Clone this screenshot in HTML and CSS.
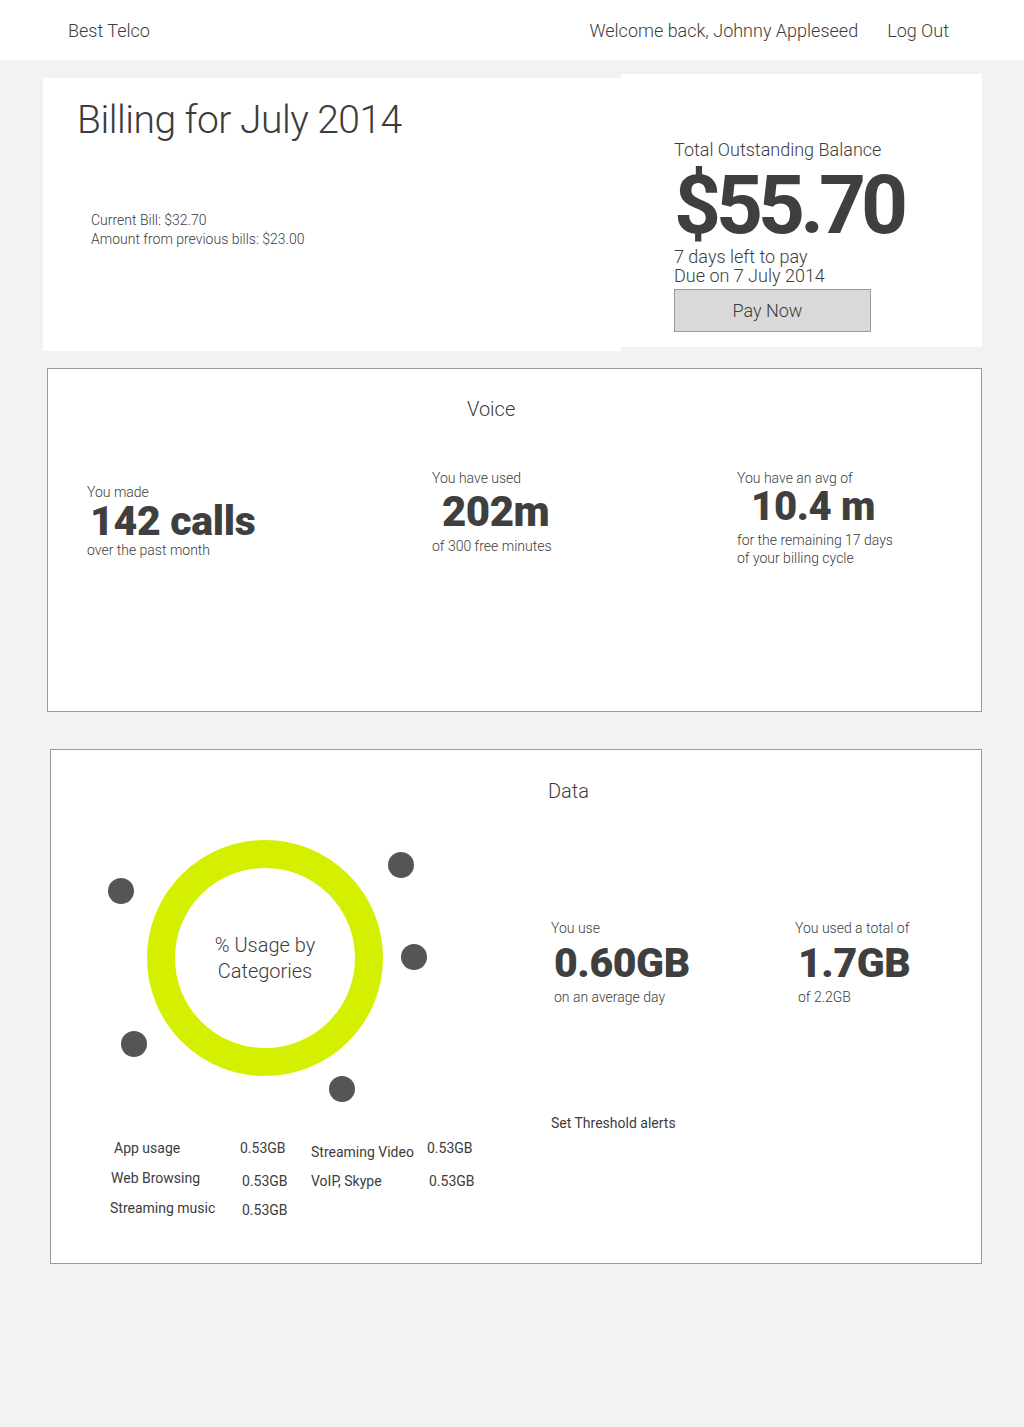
FILE: index.html
```html
<!DOCTYPE html>
<html lang="en">
<head>
<meta charset="utf-8">
<title>Best Telco – Billing</title>
<link rel="stylesheet" href="styles.css">
</head>
<body>
<header class="topbar">
  <div class="brand">Best Telco</div>
  <nav class="user-nav">
    <span>Welcome back, Johnny Appleseed</span>
    <span>Log Out</span>
  </nav>
</header>

<section class="billing">
  <div class="bill-left">
    <h1 class="bill-title">Billing for July 2014</h1>
    <div class="bill-lines">
      <div>Current Bill: $32.70</div>
      <div>Amount from previous bills: $23.00</div>
    </div>
  </div>
  <div class="bill-right">
    <div class="balance-label">Total Outstanding Balance</div>
    <div class="balance-amount">$55.70</div>
    <div class="balance-due">
      <div>7 days left to pay</div>
      <div>Due on 7 July 2014</div>
    </div>
    <div class="pay-btn">Pay Now</div>
  </div>
</section>

<section class="card voice">
  <h2 class="card-title voice-title">Voice</h2>
  <div class="voice-stats">
    <div class="stat stat-calls">
      <div class="stat-small">You made</div>
      <div class="stat-big big-calls">142 calls</div>
      <div class="stat-small">over the past month</div>
    </div>
    <div class="stat stat-minutes">
      <div class="stat-small">You have used</div>
      <div class="stat-big big-minutes">202m</div>
      <div class="stat-small sub-minutes">of 300 free minutes</div>
    </div>
    <div class="stat stat-avg">
      <div class="stat-small">You have an avg of</div>
      <div class="stat-big big-avg">10.4 m</div>
      <div class="stat-small sub-avg">for the remaining 17 days<br>of your billing cycle</div>
    </div>
  </div>
</section>

<section class="card data">
  <div class="data-left">
    <div class="donut-wrap">
      <div class="donut"><span>% Usage by<br>Categories</span></div>
      <span class="dot dot-1"></span>
      <span class="dot dot-2"></span>
      <span class="dot dot-3"></span>
      <span class="dot dot-4"></span>
      <span class="dot dot-5"></span>
    </div>
    <div class="legend">
      <span class="lg-label l-app">App usage</span>
      <span class="lg-val">0.53GB</span>
      <span class="lg-label l-video">Streaming Video</span>
      <span class="lg-val">0.53GB</span>

      <span class="lg-label l-web">Web Browsing</span>
      <span class="lg-val v-low">0.53GB</span>
      <span class="lg-label l-voip">VoIP, Skype</span>
      <span class="lg-val v-low">0.53GB</span>

      <span class="lg-label l-music">Streaming music</span>
      <span class="lg-val v-low2">0.53GB</span>
    </div>
  </div>
  <div class="data-right">
    <h2 class="card-title">Data</h2>
    <div class="data-stats">
      <div class="stat">
        <div class="stat-small">You use</div>
        <div class="stat-big big-data">0.60GB</div>
        <div class="stat-small sub-data">on an average day</div>
      </div>
      <div class="stat">
        <div class="stat-small">You used a total of</div>
        <div class="stat-big big-data">1.7GB</div>
        <div class="stat-small sub-data">of 2.2GB</div>
      </div>
    </div>
    <div class="threshold">Set Threshold alerts</div>
  </div>
</section>
</body>
</html>
```
FILE: styles.css
```css
* { box-sizing: border-box; }

body {
  margin: 0;
  background: #f2f2f2;
  color: #3c3c3c;
  font-family: Roboto, "Liberation Sans", Arial, sans-serif;
  font-weight: 300;
  min-height: 1427px;
}

/* Header */
.topbar {
  height: 60px;
  background: #fff;
  display: flex;
  align-items: center;
  justify-content: space-between;
  padding: 0 75px 0 68px;
  font-size: 18px;
  font-weight: 300;
}
.user-nav {
  display: flex;
  gap: 29px;
}

/* Billing */
.billing {
  display: flex;
  align-items: flex-start;
  padding: 14px 42px 0 43px;
}
.bill-left {
  width: 578px;
  height: 273px;
  margin-top: 4px;
  background: #fff;
  padding: 22px 0 0 34px;
}
.bill-title {
  margin: 0;
  font-size: 39px;
  line-height: 40px;
  letter-spacing: -0.5px;
  font-weight: 300;
}
.bill-lines {
  margin: 71px 0 0 14px;
  font-size: 14px;
  line-height: 19px;
}
.bill-right {
  width: 361px;
  height: 273px;
  background: #fff;
  padding: 66px 0 0 53px;
  font-weight: 300;
}
.balance-label {
  font-size: 18px;
  line-height: 20px;
}
.balance-amount {
  margin-top: 13px;
  font-size: 82px;
  line-height: 64px;
  font-weight: 700;
  letter-spacing: -5px;
  color: #3f3f3f;
}
.balance-due {
  margin-top: 10px;
  font-size: 18px;
  line-height: 19px;
}
.pay-btn {
  margin-top: 4px;
  width: 197px;
  height: 43px;
  border: 1px solid #9a9a9a;
  background: #d9d9d9;
  font-size: 18px;
  display: flex;
  align-items: center;
  justify-content: center;
  padding-right: 10px;
}

/* Cards */
.card {
  background: #fff;
  border: 1px solid #9a9a9a;
}
.card-title {
  margin: 0;
  font-size: 20px;
  line-height: 24px;
  font-weight: 300;
}
.voice {
  margin: 17px 42px 0 47px;
  height: 344px;
  padding-top: 28px;
}
.voice-title {
  margin-left: 419px;
}
.voice-stats {
  display: grid;
  grid-template-columns: 345px 305px 1fr;
  padding-left: 39px;
  margin-top: 48px;
  align-items: start;
}
.stat-small {
  font-size: 14px;
  line-height: 18px;
}
.stat-big {
  font-size: 41px;
  line-height: 40px;
  font-weight: 900;
  color: #3f3f3f;
}
.stat-calls { margin-top: 14px; }
.big-calls { padding-left: 3px; letter-spacing: -0.3px; }
.big-minutes { font-size: 42px; margin-top: 5px; padding-left: 10px; letter-spacing: -0.5px; }
.sub-minutes { margin-top: 5px; }
.big-avg { font-size: 40px; padding-left: 14px; letter-spacing: -0.3px; }
.sub-avg { margin-top: 4px; }

/* Data */
.data {
  margin: 37px 42px 0 50px;
  height: 515px;
  display: flex;
  padding-top: 29px;
}
.data-left {
  width: 497px;
  padding-top: 61px;
}
.donut-wrap {
  position: relative;
  height: 262px;
}
.donut {
  margin-left: 96px;
  width: 236px;
  height: 236px;
  border-radius: 50%;
  border: 28px solid #d4f000;
  display: flex;
  align-items: center;
  justify-content: center;
  text-align: center;
  font-size: 20px;
  line-height: 26px;
}
.dot {
  position: absolute;
  width: 26px;
  height: 26px;
  border-radius: 50%;
  background: #555;
}
.dot-1 { left: 57px;  top: 38px; }
.dot-2 { left: 337px; top: 12px; }
.dot-3 { left: 350px; top: 104px; }
.dot-4 { left: 70px;  top: 191px; }
.dot-5 { left: 278px; top: 236px; }

.legend {
  margin-top: 37px;
  display: grid;
  grid-template-columns: 130px 71px 116px auto;
  grid-auto-rows: 18px;
  row-gap: 12px;
  padding-left: 59px;
  font-size: 14px;
  line-height: 18px;
  font-weight: 400;
}
.l-app { padding-left: 4px; }
.l-video { padding-top: 4px; }
.l-web { padding-left: 1px; }
.v-low { padding-top: 3px; padding-left: 2px; }
.v-low2 { padding-top: 2px; padding-left: 2px; }
.l-voip { padding-top: 3px; }

.data-right {
  flex: 1;
}
.data-stats {
  margin-top: 116px;
  display: grid;
  grid-template-columns: 244px 1fr;
  padding-left: 3px;
}
.big-data {
  margin-top: 6px;
  padding-left: 3px;
  letter-spacing: -0.4px;
}
.sub-data {
  margin-top: 5px;
  padding-left: 3px;
}
.threshold {
  margin-top: 108px;
  padding-left: 3px;
  font-size: 14px;
  line-height: 18px;
  font-weight: 400;
}
```
